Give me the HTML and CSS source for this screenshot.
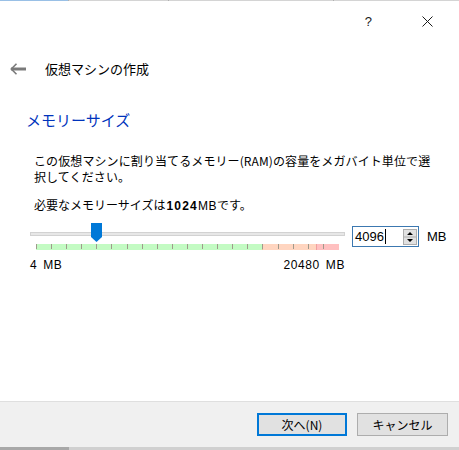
FILE: index.html
```html
<!DOCTYPE html>
<html lang="ja">
<head>
<meta charset="utf-8">
<title>仮想マシンの作成</title>
<link rel="stylesheet" href="styles.css">
</head>
<body>
<div class="frame-top"><span class="seg seg-active"></span><span class="seg seg-a"></span><span class="seg seg-b"></span><span class="seg seg-c"></span></div>
<div class="titlebar">
  <span class="help">?</span>
  <svg class="close" width="11" height="11" viewBox="0 0 11 11"><path d="M0.5 0.5 L10.5 10.5 M10.5 0.5 L0.5 10.5" stroke="#1a1a1a" stroke-width="1" fill="none"/></svg>
</div>
<div class="header">
  <svg class="back" width="17" height="12" viewBox="0 0 17 12"><path d="M1 6 H16" stroke="#7a7a7a" stroke-width="3"/><path d="M6.5 0.8 L1.3 6 L6.5 11.2" stroke="#7a7a7a" stroke-width="1.6" fill="none"/></svg>
  <span class="wizard-title">仮想マシンの作成</span>
</div>
<main class="content">
  <h1 class="heading">メモリーサイズ</h1>
  <p class="desc">この仮想マシンに割り当てるメモリー(RAM)の容量をメガバイト単位で選択してください。</p>
  <p class="recommend">必要なメモリーサイズは<b>1024</b><span class="mb">MB</span>です。</p>
  <div class="slider-row">
    <div class="slider">
      <div class="track-wrap">
        <div class="groove"></div>
        <div class="thumb"><svg width="11" height="19" viewBox="0 0 11 19"><path d="M0 0 H11 V14 L5.5 19 L0 14 Z" fill="#0078d7"/></svg></div>
      </div>
      <div class="scale">
        <span class="zone zone-ok"></span><span class="zone zone-warn"></span><span class="zone zone-bad"></span>
        <div class="ticks"><i></i><i></i><i></i><i></i><i></i><i></i><i></i><i></i><i></i><i></i><i></i><i></i><i></i><i></i><i></i><i></i><i></i><i></i><i></i><i></i></div>
      </div>
      <div class="limits"><span>4 MB</span><span>20480 MB</span></div>
    </div>
    <div class="spinbox">
      <span class="value">4096</span><span class="caret"></span>
      <span class="spin-btns">
        <svg width="14" height="16" viewBox="0 0 14 16"><rect x="0.5" y="0.5" width="13" height="15" fill="#e1e1e1" stroke="#adadad"/><path d="M4 6 L7 3 L10 6 Z M4 10 L7 13 L10 10 Z" fill="#000"/><path d="M1 8 H13" stroke="#adadad"/></svg>
      </span>
    </div>
    <span class="unit">MB</span>
  </div>
</main>
<footer class="footer">
  <button class="btn btn-default">次へ(N)</button>
  <button class="btn">キャンセル</button>
</footer>
<div class="frame-bottom"><span class="fb-dark"></span><span class="fb-light"></span></div>
</body>
</html>
```

FILE: styles.css
```css
* { box-sizing: border-box; }
html, body { margin: 0; padding: 0; }
body {
  width: 459px;
  height: 450px;
  background: #ffffff;
  font-family: "Noto Sans CJK JP", "Liberation Sans", sans-serif;
  font-size: 12px;
  color: #000;
  display: flex;
  flex-direction: column;
  overflow: hidden;
}
.frame-top { display: flex; height: 1px; flex: none; }
.seg { display: block; height: 1px; }
.seg-active { width: 68px; background: #99c0e6; }
.seg-a { width: 100px; background: #d4d4d4; border-left: 1px solid #b0b0b0; }
.seg-b { width: 165px; background: #d4d4d4; border-left: 1px solid #b0b0b0; }
.seg-c { flex: 1; background: #d4d4d4; border-left: 1px solid #b0b0b0; }

.titlebar {
  height: 41px;
  flex: none;
  display: flex;
  align-items: center;
  justify-content: flex-end;
  padding-right: 26px;
}
.help {
  font-family: "Liberation Sans", sans-serif;
  font-size: 13px;
  line-height: 14px;
  margin-right: 50px;
  color: #1a1a1a;
}
.close { display: block; }

.header {
  height: 54px;
  flex: none;
  display: flex;
  align-items: center;
  padding-left: 10px;
}
.back { display: block; margin-right: 18px; }
.wizard-title { font-size: 13px; line-height: 18px; }

.content { padding: 0 0 0 25px; }
.heading {
  margin: 13px 0 0 1px;
  font-size: 15px;
  line-height: 22px;
  font-weight: normal;
  color: #0033bc;
}
.desc {
  margin: 22px 0 0 9px;
  width: 402px;
  line-height: 16px;
  letter-spacing: 0.1px;
}
.recommend {
  margin: 12px 0 0 9px;
  line-height: 16px;
}
.recommend b {
  font-family: "Liberation Sans", sans-serif;
  font-weight: bold;
  letter-spacing: 1.2px;
  margin-left: 1px;
}
.recommend .mb { font-family: "Liberation Sans", sans-serif; letter-spacing: 0.5px; }

.slider-row {
  margin-top: 9px;
  margin-left: 5px;
  display: flex;
  align-items: flex-start;
}
.slider { width: 315px; }
.track-wrap { position: relative; height: 19px; }
.groove {
  position: relative;
  top: 9px;
  height: 4px;
  background: #e7e7e7;
  border: 1px solid #d2d2d2;
}
.thumb { position: absolute; left: 61px; top: 0; line-height: 0; }
.scale {
  position: relative;
  display: flex;
  margin: 2px 0 0 6px;
  width: 303px;
  height: 6px;
}
.zone { display: block; height: 6px; }
.zone-ok { width: 226px; background: #c3fbc3; }
.zone-warn { width: 54px; background: #ffd5c0; border-left: 1px solid #e8b898; }
.zone-bad { width: 23px; background: #ffc0c0; border-left: 1px solid #f0a0a0; }
.ticks {
  position: absolute;
  left: 0;
  top: 0;
  width: 288px;
  height: 5px;
  display: flex;
  justify-content: space-between;
}
.ticks i { display: block; width: 1px; height: 5px; background: #a09a8c; }
.limits {
  display: flex;
  justify-content: space-between;
  margin-top: 8px;
  font-family: "Liberation Sans", sans-serif;
  font-size: 12px;
  line-height: 14px;
  letter-spacing: 0.6px;
  word-spacing: 2px;
}

.spinbox {
  margin: 3px 0 0 7px;
  width: 67px;
  height: 21px;
  border: 1px solid #3c78b0;
  display: flex;
  align-items: center;
  padding-left: 2px;
  font-family: "Liberation Sans", sans-serif;
  font-size: 13px;
}
.caret { display: block; width: 1px; height: 15px; background: #000; margin-left: 1px; }
.spin-btns { margin-left: auto; margin-right: 1px; line-height: 0; }
.spin-btns svg { display: block; }
.unit {
  margin: 6px 0 0 8px;
  font-family: "Liberation Sans", sans-serif;
  font-size: 13px;
  line-height: 16px;
}

.footer {
  margin-top: auto;
  height: 46px;
  flex: none;
  background: #f0f0f0;
  border-top: 1px solid #dfdfdf;
  display: flex;
  justify-content: flex-end;
  align-items: flex-start;
  gap: 10px;
  padding: 11px 11px 0 0;
}
.btn {
  width: 90px;
  height: 23px;
  background: #e1e1e1;
  border: 1px solid #adadad;
  font-family: "Noto Sans CJK JP", sans-serif;
  font-size: 12px;
  color: #000;
  padding: 0;
  margin: 0;
}
.btn + .btn { width: 91px; }
.btn-default { border: 2px solid #0078d7; }
.frame-bottom { display: flex; height: 3px; flex: none; }
.fb-dark { width: 69px; background: #a8a8a8; }
.fb-light { flex: 1; background: #d0d0d0; }
```
